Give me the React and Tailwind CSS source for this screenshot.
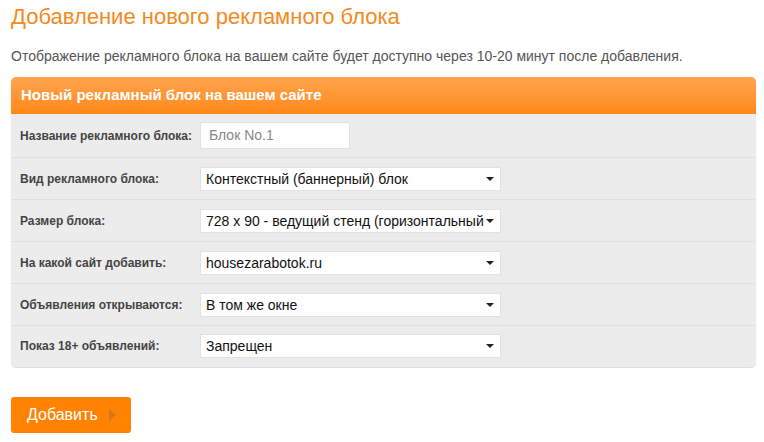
const rows = [
  { label: 'Вид рекламного блока:', value: 'Контекстный (баннерный) блок' },
  { label: 'Размер блока:', value: '728 x 90 - ведущий стенд (горизонтальный тип)' },
  { label: 'На какой сайт добавить:', value: 'housezarabotok.ru' },
  { label: 'Объявления открываются:', value: 'В том же окне' },
  { label: 'Показ 18+ объявлений:', value: 'Запрещен' },
]

function Select({ value }) {
  return (
    <div className="flex h-[22px] w-[299px] items-center bg-white pl-[5px] pr-[6px] shadow-[0_0_0_1px_#e2e2e2]">
      <span className="flex-1 overflow-hidden whitespace-nowrap text-[14px] leading-[18px] text-[#111]">{value}</span>
      <span className="ml-[2px] h-0 w-0 border-x-[4px] border-t-[4px] border-x-transparent border-t-[#222]"></span>
    </div>
  )
}

export default function App() {
  return (
    <div className="min-h-[442px] bg-white px-[11px] pt-[3px] font-['Liberation_Sans',Arial,sans-serif]">
      <h1 className="text-[22px] leading-[28px] text-[#f28a1e]">Добавление нового рекламного блока</h1>
      <p className="mt-[16px] text-[14px] leading-[18px] text-[#555]">
        Отображение рекламного блока на вашем сайте будет доступно через 10-20 минут после добавления.
      </p>

      <div className="mt-[12px] w-[745px] rounded-[5px] bg-[#ececec] shadow-[0_1px_1px_#dcdcdc]">
        {/* Header */}
        <div className="flex h-[37px] items-center rounded-t-[5px] bg-gradient-to-b from-[#ffa54d] to-[#ff8812] px-[10px]">
          <span className="text-[15px] font-bold text-white">Новый рекламный блок на вашем сайте</span>
        </div>

        {/* Name row */}
        <div className="flex h-[43px] items-center px-[9px]">
          <span className="w-[181px] text-[12px] font-bold text-[#444]">Название рекламного блока:</span>
          <div className="flex h-[25px] w-[148px] items-center bg-white px-[8px] text-[14px] text-[#888] shadow-[0_0_0_1px_#e2e2e2]">
            Блок No.1
          </div>
        </div>

        {rows.map((r, i) => (
          <div
            key={r.label}
            className={`flex h-[42px] items-center border-t border-dotted border-[#d4d4d4] px-[9px] ${i === rows.length - 1 ? 'pb-[1px]' : ''}`}
          >
            <span className="w-[181px] text-[12px] font-bold text-[#444]">{r.label}</span>
            <Select value={r.value} />
          </div>
        ))}
      </div>

      <button className="mt-[30px] flex h-[36px] w-[120px] items-center rounded-[3px] bg-[#ff8300] pl-[16px] text-[16px] text-white">
        Добавить
        <span className="ml-[11px] h-0 w-0 border-y-[6px] border-l-[7px] border-y-transparent border-l-[#d9741a]"></span>
      </button>
    </div>
  )
}
